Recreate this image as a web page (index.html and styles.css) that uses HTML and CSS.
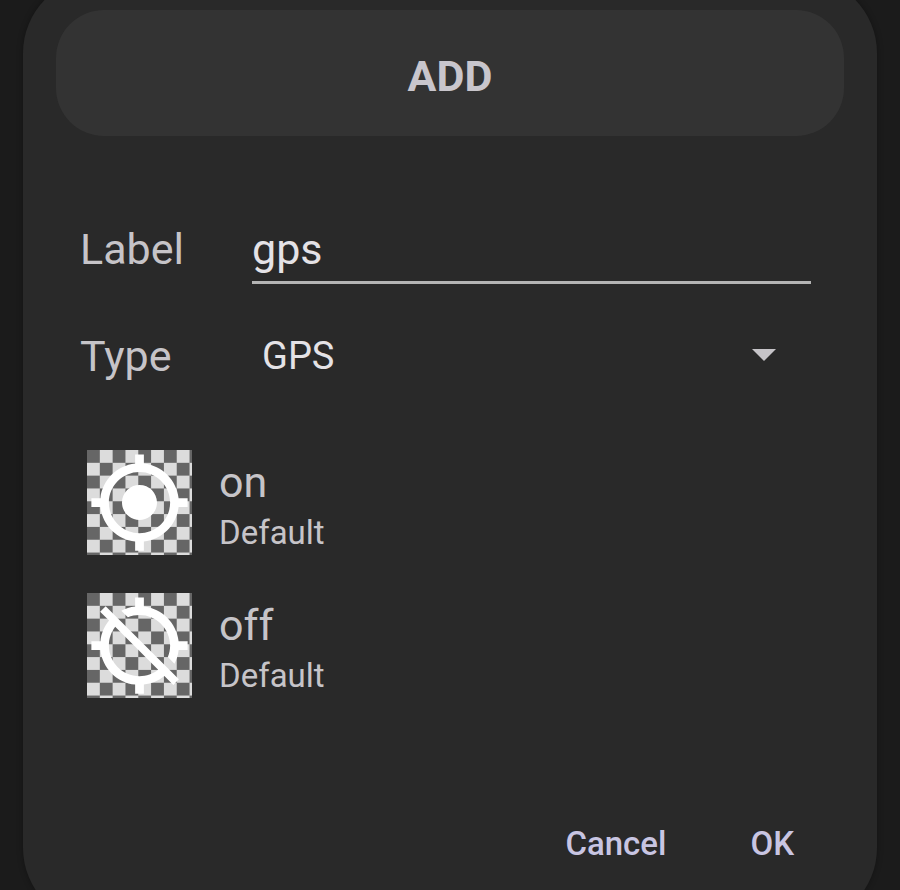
FILE: index.html
```html
<!DOCTYPE html>
<html lang="en">
<head>
    <meta charset="UTF-8">
    <meta name="viewport" content="width=device-width, initial-scale=1.0">
    <title>Add</title>
    <link rel="stylesheet" href="styles.css">
</head>
<body>
    <form class="dialog">
        <h1 class="dialog-title">ADD</h1>

        <div class="fields">
            <div class="field">
                <label for="label">Label</label>
                <input type="text" id="label" name="label" value="gps">
            </div>
            <div class="field">
                <label for="type">Type</label>
                <div class="select">
                    <select id="type" name="type">
                        <option selected>GPS</option>
                    </select>
                    <svg class="arrow" viewBox="0 0 24 12" aria-hidden="true">
                        <path d="M0 0h24L12 12z"/>
                    </svg>
                </div>
            </div>
        </div>

        <!-- Icons for each state -->
        <ul class="states">
            <li class="state">
                <svg class="state-icon" viewBox="0 0 24 24" aria-hidden="true">
                    <defs>
                        <pattern id="checker" width="5.86" height="5.86" patternUnits="userSpaceOnUse">
                            <path fill="#dcdcdc" d="M0 0h5.86v5.86H0z"/>
                            <path fill="#666" d="M0 0h2.93v2.93H0zM2.93 2.93h2.93v2.93H2.93z"/>
                        </pattern>
                    </defs>
                    <path fill="url(#checker)" d="M0 0h24v24H0z"/>
                    <path fill="#fff" d="M12 8c-2.21 0-4 1.79-4 4s1.79 4 4 4 4-1.79 4-4-1.79-4-4-4zm8.94 3c-.46-4.17-3.77-7.48-7.94-7.94V1h-2v2.06C6.83 3.52 3.52 6.83 3.06 11H1v2h2.06c.46 4.17 3.77 7.48 7.94 7.94V23h2v-2.06c4.17-.46 7.48-3.77 7.94-7.94H23v-2h-2.06zM12 19c-3.87 0-7-3.13-7-7s3.13-7 7-7 7 3.13 7 7-3.13 7-7 7z"/>
                </svg>
                <div class="state-text">
                    <span class="state-name">on</span>
                    <span class="state-value">Default</span>
                </div>
            </li>
            <li class="state">
                <svg class="state-icon" viewBox="0 0 24 24" aria-hidden="true">
                    <path fill="url(#checker)" d="M0 0h24v24H0z"/>
                    <path fill="#fff" d="M20.94 11c-.46-4.17-3.77-7.48-7.94-7.94V1h-2v2.06c-1.13.12-2.19.46-3.16.97l1.5 1.5C10.16 5.19 11.06 5 12 5c3.87 0 7 3.13 7 7 0 .94-.19 1.84-.52 2.65l1.5 1.5c.5-.96.84-2.02.97-3.15H23v-2h-2.06zM3 4.27l2.04 2.04C3.97 7.62 3.25 9.23 3.06 11H1v2h2.06c.46 4.17 3.77 7.48 7.94 7.94V23h2v-2.06c1.77-.2 3.38-.91 4.69-1.98L19.73 21 21 19.73 4.27 3 3 4.27zm13.27 13.27C15.09 18.45 13.61 19 12 19c-3.87 0-7-3.13-7-7 0-1.61.55-3.09 1.45-4.27l9.82 9.81z"/>
                </svg>
                <div class="state-text">
                    <span class="state-name">off</span>
                    <span class="state-value">Default</span>
                </div>
            </li>
        </ul>

        <div class="actions">
            <button type="button">Cancel</button>
            <button type="submit">OK</button>
        </div>
    </form>
</body>
</html>
```
FILE: styles.css
```css
html {
    overflow: hidden;
}
body {
    margin: 0;
    padding: 0 23px;
    background-color: #1b1b1b;
    color: #c6c4c8;
    font-family: Roboto, sans-serif;
}
.dialog {
    box-sizing: border-box;
    margin: -23px 0;
    padding: 33px 33px 40px;
    border-radius: 76px;
    background-color: #292929;
    box-shadow: 0 0 6px rgba(0,0,0,0.3);
}
.dialog-title {
    margin: 0;
    padding: 40px 0 34px;
    border-radius: 48px;
    background-color: #333;
    color: #c9c6cc;
    font-size: 43px;
    line-height: 52px;
    text-align: center;
}
.fields {
    padding: 78px 33px 0 24px;
}
.field {
    display: flex;
    align-items: center;
    margin-bottom: 38px;
}
.field label {
    width: 172px;
    font-size: 43px;
    line-height: 68px;
}
input,
select {
    box-sizing: border-box;
    width: 100%;
    margin: 0;
    border: none;
    border-radius: 0;
    outline: none;
    background-color: transparent;
    color: #e4e2e6;
    font-family: inherit;
}
input {
    flex: 1;
    min-width: 0;
    height: 70px;
    padding: 2px 0 0;
    border-bottom: 3px solid #b4b4b4;
    font-size: 43px;
}
.select {
    position: relative;
    flex: 1;
}
select {
    height: 68px;
    padding: 0 60px 0 10px;
    appearance: none;
    font-size: 38px;
}
.arrow {
    position: absolute;
    top: 27px;
    right: 35px;
    width: 24px;
    height: 12px;
    fill: #c6c4c8;
    pointer-events: none;
}
.states {
    margin: 0;
    padding: 22px 31px 0;
    list-style: none;
}
.state {
    display: flex;
    align-items: center;
    gap: 27px;
    margin-bottom: 38px;
}
.state-icon {
    width: 105px;
    height: 105px;
}
.state-text {
    display: flex;
    flex-direction: column;
    gap: 5px;
    padding-top: 3px;
}
.state-name {
    font-size: 43px;
    line-height: 52px;
}
.state-value {
    font-size: 33px;
    line-height: 40px;
}
.actions {
    display: flex;
    justify-content: flex-end;
    gap: 36px;
    padding: 68px 26px 0 0;
}
button {
    padding: 20px 24px;
    border: none;
    background-color: transparent;
    color: #c8c5e2;
    font-family: inherit;
    font-size: 33px;
    font-weight: 500;
    line-height: 40px;
    cursor: pointer;
}
```
